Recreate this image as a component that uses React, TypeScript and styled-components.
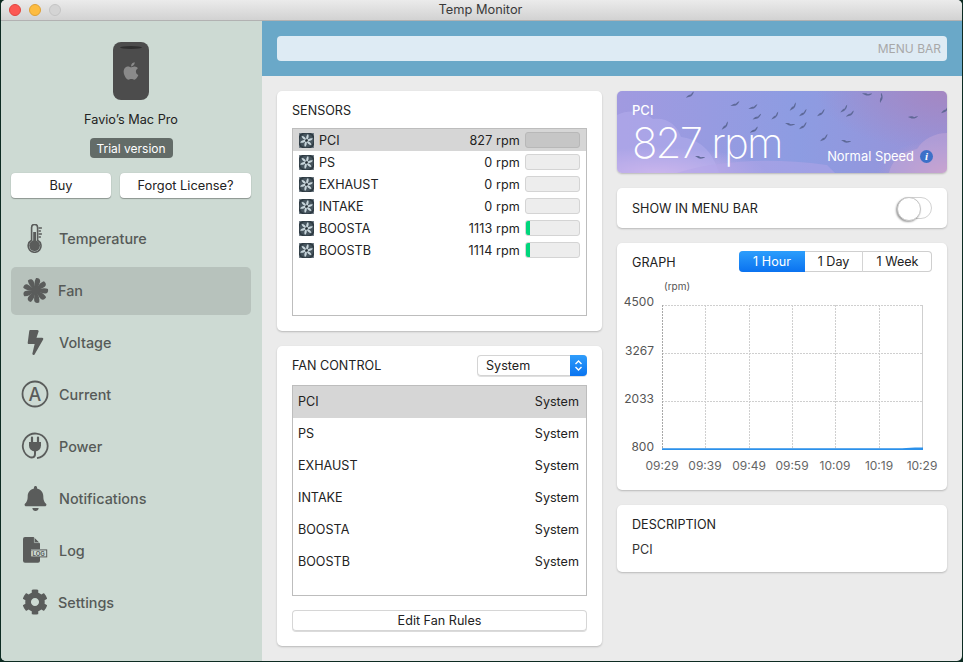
import React from "react";
import styled, { createGlobalStyle } from "styled-components";
import { FaApple, FaBell, FaBolt, FaCog } from "react-icons/fa";

const Global = createGlobalStyle`
  html, body { margin: 0; padding: 0; background: #0d2b22; }
  body { font-family: Inter, "Liberation Sans", sans-serif; font-size: 12.6px; color: #222; }
  * { box-sizing: border-box; }
`;

const Page = styled.div`
  width: 963px;
  height: 662px;
  padding: 0 1px 1px 1px;
  overflow: hidden;
`;
const Win = styled.div`
  height: 661px;
  border-radius: 5px;
  overflow: hidden;
  display: flex;
  flex-direction: column;
  background: #ebebeb;
`;
const TitleBar = styled.div`
  height: 21px;
  flex: none;
  position: relative;
  background: linear-gradient(#ebebeb, #d2d2d2);
  border-bottom: 1px solid #b2b2b2;
  display: flex;
  align-items: center;
  justify-content: center;
  font-size: 12.8px;
  color: #3a3a3a;
  padding: 0 2px 1px 0;
`;
const Lights = styled.div`
  position: absolute;
  left: 8px;
  top: 4px;
  display: flex;
  gap: 8px;
`;
const Light = styled.span<{ $c: string; $b: string }>`
  width: 12px;
  height: 12px;
  border-radius: 50%;
  background: ${p => p.$c};
  border: 1px solid ${p => p.$b};
`;
const Body = styled.div`
  flex: 1;
  display: flex;
  min-height: 0;
`;
const Side = styled.aside`
  width: 261px;
  flex: none;
  background: #cddad3;
  display: flex;
  flex-direction: column;
  align-items: center;
  padding: 21px 11px 0 10px;
`;
const MacBody = styled.div`
  width: 36px;
  height: 58px;
  border-radius: 8px;
  background: #4c4c4c;
  position: relative;
  display: flex;
  align-items: center;
  justify-content: center;
  color: #8a8a8a;
  font-size: 20px;
  &::before {
    content: "";
    position: absolute;
    top: 4px;
    left: 7px;
    right: 7px;
    height: 3px;
    border-radius: 50%;
    background: #2f2f2f;
  }
`;
const MacName = styled.div`
  margin-top: 12px;
  font-size: 12.7px;
  line-height: 16px;
  color: #222;
`;
const Badge = styled.div`
  margin-top: 10px;
  width: 83px;
  height: 20px;
  border-radius: 4px;
  background: #636c68;
  color: #fff;
  font-size: 12px;
  display: flex;
  align-items: center;
  justify-content: center;
`;
const BtnRow = styled.div`
  margin-top: 15px;
  width: 100%;
  display: flex;
  gap: 9px;
`;
const SideBtn = styled.div<{ $w: number }>`
  width: ${p => p.$w}px;
  height: 25px;
  background: #fff;
  border-radius: 4px;
  box-shadow: 0 1px 1px rgba(0, 0, 0, 0.3), 0 0 1px rgba(0, 0, 0, 0.2);
  font-size: 12.8px;
  color: #222;
  display: flex;
  align-items: center;
  justify-content: center;
`;
const Nav = styled.nav`
  margin-top: 17px;
  width: 100%;
  display: flex;
  flex-direction: column;
  gap: 4px;
`;
const NavItem = styled.div<{ $on?: boolean }>`
  height: 48px;
  border-radius: 5px;
  background: ${p => (p.$on ? "#b7c2bc" : "transparent")};
  display: flex;
  align-items: center;
  padding: 0 0 2px 10px;
  gap: 10px;
  color: #565a58;
  font-size: 14.4px;
  font-weight: 500;
`;
const NavIcon = styled.span<{ $tight?: boolean }>`
  width: 28px;
  height: 29px;
  flex: none;
  display: flex;
  align-items: center;
  justify-content: center;
  color: #5a5c5b;
  margin-right: ${p => (p.$tight ? "-1px" : "0")};
  svg { display: block; }
`;
const Main = styled.main`
  flex: 1;
  display: flex;
  flex-direction: column;
  min-width: 0;
`;
const Banner = styled.div`
  height: 55px;
  flex: none;
  background: #6aa8c8;
  padding: 15px;
`;
const MenuField = styled.div`
  height: 25px;
  border-radius: 4px;
  background: #deebf4;
  color: #a8a8a8;
  font-size: 12px;
  display: flex;
  align-items: center;
  justify-content: flex-end;
  padding-right: 6px;
`;
const Content = styled.div`
  flex: 1;
  display: flex;
  gap: 15px;
  padding: 15px;
`;
const Col = styled.div<{ $w: number }>`
  width: ${p => p.$w}px;
  display: flex;
  flex-direction: column;
  gap: 15px;
`;
const Card = styled.section<{ $h: number }>`
  height: ${p => p.$h}px;
  flex: none;
  background: #fff;
  border-radius: 5px;
  box-shadow: 0 1px 2px rgba(0, 0, 0, 0.22);
  padding: 0 15px;
  position: relative;
`;
const CardTitle = styled.div`
  font-size: 12.6px;
  line-height: 16px;
  color: #222;
`;
const LowTitle = styled(CardTitle)`
  padding-top: 2px;
`;
const SensorHead = styled(CardTitle)`
  padding-top: 12px;
  margin-bottom: 9px;
`;
const ListBox = styled.div<{ $h: number }>`
  height: ${p => p.$h}px;
  border: 1px solid #bdbdbd;
  background: #fff;
`;
const SensorRow = styled.div<{ $on?: boolean }>`
  height: 22px;
  display: flex;
  align-items: center;
  padding: 0 6px;
  background: ${p => (p.$on ? "#d6d6d6" : "transparent")};
`;
const SensorName = styled.span`
  margin-left: 5px;
  flex: 1;
`;
const SensorVal = styled.span`
  margin-right: 5px;
  letter-spacing: 0.1px;
`;
const Meter = styled.span<{ $on?: boolean }>`
  width: 55px;
  height: 16px;
  border-radius: 3px;
  border: 1px solid ${p => (p.$on ? "#b8b8b8" : "#d4d4d4")};
  background: ${p => (p.$on ? "#c6c6c6" : "#ededed")};
  display: block;
  overflow: hidden;
`;
const MeterFill = styled.span`
  display: block;
  height: 100%;
  background: #00d67c;
`;
const ControlHead = styled.div`
  height: 39px;
  display: flex;
  align-items: center;
  justify-content: space-between;
`;
const SelectBox = styled.div`
  width: 110px;
  height: 21px;
  border-radius: 4px;
  background: #fff;
  box-shadow: inset 0 0 0 1px #d4d4d4, 0 1px 0 rgba(0, 0, 0, 0.12);
  display: flex;
  align-items: center;
  justify-content: space-between;
  padding-left: 9px;
  overflow: hidden;
`;
const SelectArrows = styled.span`
  width: 17px;
  height: 21px;
  background: linear-gradient(#2f9dfb, #0a74f0);
  display: flex;
  align-items: center;
  justify-content: center;
`;
const ControlRow = styled.div<{ $on?: boolean }>`
  height: 32px;
  display: flex;
  align-items: center;
  justify-content: space-between;
  padding: 0 7px 2px 5px;
  background: ${p => (p.$on ? "#d6d6d6" : "transparent")};
`;
const EditBtn = styled.div`
  margin-top: 14px;
  height: 21px;
  border-radius: 4px;
  background: #fff;
  box-shadow: inset 0 0 0 1px #d6d6d6, 0 1px 0 rgba(0, 0, 0, 0.14);
  display: flex;
  align-items: center;
  justify-content: center;
`;
const Hero = styled.section`
  height: 82px;
  flex: none;
  border-radius: 5px;
  position: relative;
  overflow: hidden;
  box-shadow: 0 1px 2px rgba(0, 0, 0, 0.22);
  color: #fff;
  padding: 11px 15px 0;
  background:
    radial-gradient(ellipse 110px 26px at 12% 100%, #d8b8ea 0%, rgba(216, 184, 234, 0) 100%),
    radial-gradient(ellipse 70px 34px at 100% 100%, #cd9fc8 0%, rgba(205, 159, 200, 0) 100%),
    radial-gradient(ellipse 130px 60px at 100% 0%, #a487c2 0%, rgba(164, 135, 194, 0) 100%),
    linear-gradient(90deg, #a19ae0, #8d9ce2 55%, #9892d8);
`;
const Birds = styled.svg`
  position: absolute;
  inset: 0;
`;
const HeroName = styled.div`
  position: relative;
  font-size: 13px;
  line-height: 16px;
  font-weight: 500;
`;
const HeroValue = styled.div`
  position: relative;
  font-size: 42px;
  line-height: 40px;
  font-weight: 200;
  margin-top: 5px;
  letter-spacing: -1.8px;
`;
const HeroStatus = styled.div`
  position: absolute;
  right: 14px;
  bottom: 9px;
  display: flex;
  align-items: center;
  gap: 6px;
  font-size: 12.9px;
`;
const InfoDot = styled.span`
  width: 13px;
  height: 13px;
  border-radius: 50%;
  background: #3d70c8;
  color: #fff;
  font: italic 700 11px/13px "Liberation Serif", serif;
  text-align: center;
`;
const ToggleCard = styled(Card)`
  display: flex;
  align-items: center;
  justify-content: space-between;
`;
const Toggle = styled.span`
  width: 35px;
  height: 22px;
  border-radius: 11px;
  border: 1px solid #d2d2d2;
  position: relative;
  &::after {
    content: "";
    position: absolute;
    left: -1px;
    top: -1px;
    width: 22px;
    height: 22px;
    border-radius: 50%;
    background: #fff;
    border: 1px solid #c4c4c4;
    box-shadow: -1px 1px 2px rgba(0, 0, 0, 0.4);
  }
`;
const GraphHead = styled.div`
  display: flex;
  align-items: center;
  justify-content: space-between;
  padding-top: 8px;
`;
const Segments = styled.div`
  width: 193px;
  height: 21px;
  display: flex;
  border-radius: 4px;
  overflow: hidden;
  box-shadow: inset 0 0 0 1px #cfcfcf;
`;
const Segment = styled.div<{ $w: number; $on?: boolean; $div?: boolean }>`
  width: ${p => p.$w}px;
  display: flex;
  align-items: center;
  justify-content: center;
  color: ${p => (p.$on ? "#fff" : "#222")};
  background: ${p => (p.$on ? "linear-gradient(#2c9efc, #0a72f0)" : "transparent")};
  border-left: ${p => (p.$div ? "1px solid #d4d4d4" : "none")};
`;
const Chart = styled.svg`
  display: block;
  margin: 0 0 0 -15px;
`;
const DescText = styled.div`
  margin-top: 9px;
  line-height: 16px;
  color: #333;
`;
const DescHead = styled(CardTitle)`
  padding-top: 12px;
`;

const FanGlyph = () => (
  <svg width="15" height="15" viewBox="0 0 15 15">
    <rect width="15" height="15" rx="1" fill="#2f3b43" />
    <circle cx="7.5" cy="7.5" r="7" fill="#46545d" />
    {[0, 60, 120, 180, 240, 300].map(a => (
      <path key={a} d="M7.5 7.5 C6.8 4.8 7.2 2.2 9 1 C10.2 2.8 9.8 5.6 7.5 7.5Z" fill="#c9d6dc" transform={`rotate(${a} 7.5 7.5)`} />
    ))}
    <circle cx="7.5" cy="7.5" r="1.3" fill="#232c32" />
    <path d="M0.5 0.5h2M0.5 0.5v2M14.5 0.5h-2M14.5 0.5v2M0.5 14.5h2M0.5 14.5v-2M14.5 14.5h-2M14.5 14.5v-2" stroke="#8b99a1" strokeWidth="0.6" fill="none" />
  </svg>
);

const Thermo = () => (
  <svg width="22" height="29" viewBox="0 0 22 29" fill="none">
    <path d="M7.6 3.4a3 3 0 0 1 6 0v12.8a6.4 6.4 0 1 1-6 0Z" fill="#cddad3" stroke="#5a5c5b" strokeWidth="1.6" />
    <circle cx="10.6" cy="21.6" r="5.4" fill="#5a5c5b" />
    <rect x="9.2" y="8" width="2.8" height="12" fill="#5a5c5b" />
    <path d="M14.5 4h3.4M14.5 7h2.4M14.5 10h3.4M14.5 13h2.4" stroke="#5a5c5b" strokeWidth="1.3" />
  </svg>
);
const FanBig = () => (
  <svg width="27" height="27" viewBox="0 0 28 28">
    {[0, 40, 80, 120, 160, 200, 240, 280, 320].map(a => (
      <path key={a} d="M14 14 C12.4 9 12.6 4 14.6 1 C17.6 0.8 19.2 2.6 18.8 4.8 C18 8 16 11 14 14Z" fill="#5a5c5b" transform={`rotate(${a} 14 14)`} />
    ))}
    <circle cx="14" cy="14" r="4" fill="#5a5c5b" />
  </svg>
);
const Amp = () => (
  <svg width="28" height="28" viewBox="0 0 28 28">
    <circle cx="14" cy="14" r="12.5" fill="none" stroke="#5a5c5b" strokeWidth="1.8" />
    <text x="14" y="20.5" fontSize="18" fontFamily="Inter, sans-serif" textAnchor="middle" fill="#5a5c5b">A</text>
  </svg>
);
const Plug = () => (
  <svg width="28" height="28" viewBox="0 0 28 28" fill="none" stroke="#5a5c5b">
    <path d="M10 25.6A12.4 12.4 0 1 1 16 26.2" strokeWidth="1.8" />
    <path d="M11 5.5v5M17 5.5v5" strokeWidth="2.2" strokeLinecap="round" />
    <path d="M8 10h12v3.5a6 6 0 0 1-12 0Z" fill="#5a5c5b" stroke="none" />
    <path d="M14 18v4c0 2.5-1.5 3.6-4 3.6" strokeWidth="2" />
  </svg>
);
const LogIcon = () => (
  <svg width="26" height="26" viewBox="0 0 26 26">
    <path d="M1 2a2 2 0 0 1 2-2h8.6L18 6.4V12H9v8h9v3.8a2 2 0 0 1-2 2H3a2 2 0 0 1-2-2Z" fill="#5a5c5b" />
    <path d="M12.4 0.4 17.6 5.6H12.4Z" fill="#5a5c5b" stroke="#cddad3" strokeWidth="0.6" />
    <rect x="8.2" y="12.4" width="17" height="8" fill="#5a5c5b" />
    <rect x="9.2" y="13.4" width="15" height="6" fill="#cddad3" />
    <text x="16.7" y="18.9" fontSize="6" fontWeight="700" fontFamily="Inter, sans-serif" textAnchor="middle" fill="#5a5c5b">LOG</text>
  </svg>
);

const nav: [string, React.ReactNode, boolean?][] = [
  ["Temperature", <Thermo />],
  ["Fan", <FanBig />, true],
  ["Voltage", <FaBolt size={25} />],
  ["Current", <Amp />],
  ["Power", <Plug />],
  ["Notifications", <FaBell size={25} />],
  ["Log", <LogIcon />],
  ["Settings", <FaCog size={26} />],
];

const sensors: [string, string, number, boolean?][] = [
  ["PCI", "827 rpm", 0, true],
  ["PS", "0 rpm", 0],
  ["EXHAUST", "0 rpm", 0],
  ["INTAKE", "0 rpm", 0],
  ["BOOSTA", "1113 rpm", 8],
  ["BOOSTB", "1114 rpm", 8],
];
const controls = ["PCI", "PS", "EXHAUST", "INTAKE", "BOOSTA", "BOOSTB"];

const birds: [number, number, number][] = [
  [73, 4, -25], [118, 13, -15], [136, 16, -15], [176, 16, -40], [140, 26, -20], [158, 25, -35],
  [186, 22, -30], [204, 22, -30], [227, 18, -35], [233, 23, -25], [250, 3, 15], [264, 7, -70],
  [296, 26, 10], [328, 19, -30], [108, 35, -40], [137, 39, -25], [173, 33, 20], [186, 35, -30],
  [207, 47, -30], [229, 50, 20], [83, 66, 20],
];

const xs = [45, 88, 132, 175, 218, 262, 305];
const hLines = [33.5, 81.5, 129.5];
const times = ["09:29", "09:39", "09:49", "09:59", "10:09", "10:19", "10:29"];
const rpm: [string, number][] = [["4500", 34], ["3267", 83], ["2033", 131], ["800", 179]];
const labelFont = "Inter, 'Liberation Sans', sans-serif";

export default function App() {
  return (
    <Page>
      <Global />
      <Win>
        <TitleBar>
          <Lights>
            <Light $c="#fc5753" $b="#e0443e" />
            <Light $c="#fdbc40" $b="#dea034" />
            <Light $c="#d4d4d4" $b="#c4c4c4" />
          </Lights>
          Temp Monitor
        </TitleBar>
        <Body>
          <Side>
            <MacBody><FaApple /></MacBody>
            <MacName>Favio’s Mac Pro</MacName>
            <Badge>Trial version</Badge>
            <BtnRow>
              <SideBtn $w={100}>Buy</SideBtn>
              <SideBtn $w={131}>Forgot License?</SideBtn>
            </BtnRow>
            <Nav>
              {nav.map(([label, icon, on]) => (
                <NavItem key={label} $on={on}>
                  <NavIcon $tight={label === "Fan" || label === "Settings"}>{icon}</NavIcon>
                  {label}
                </NavItem>
              ))}
            </Nav>
          </Side>
          <Main>
            <Banner>
              <MenuField>MENU BAR</MenuField>
            </Banner>
            <Content>
              <Col $w={325}>
                <Card $h={240}>
                  <SensorHead>SENSORS</SensorHead>
                  <ListBox $h={188}>
                    {sensors.map(([name, val, pct, on]) => (
                      <SensorRow key={name} $on={on}>
                        <FanGlyph />
                        <SensorName>{name}</SensorName>
                        <SensorVal>{val}</SensorVal>
                        <Meter $on={on}>
                          {pct > 0 && <MeterFill style={{ width: `${pct}%` }} />}
                        </Meter>
                      </SensorRow>
                    ))}
                  </ListBox>
                </Card>
                <Card $h={300}>
                  <ControlHead>
                    <CardTitle>FAN CONTROL</CardTitle>
                    <SelectBox>
                      System
                      <SelectArrows>
                        <svg width="9" height="13" viewBox="0 0 9 13" fill="none" stroke="#fff" strokeWidth="1.4">
                          <path d="M1.5 5 4.5 2l3 3M1.5 8l3 3 3-3" />
                        </svg>
                      </SelectArrows>
                    </SelectBox>
                  </ControlHead>
                  <ListBox $h={211}>
                    {controls.map((c, i) => (
                      <ControlRow key={c} $on={i === 0}>
                        <span>{c}</span>
                        <span>System</span>
                      </ControlRow>
                    ))}
                  </ListBox>
                  <EditBtn>Edit Fan Rules</EditBtn>
                </Card>
              </Col>
              <Col $w={330}>
                <Hero>
                  <Birds width="330" height="82" viewBox="0 0 330 82">
                    <path d="M0 24c12-6 26-4 36 4 14-2 24 6 28 18 18 2 32 14 38 36H0Z" fill="#b9b2f0" opacity="0.45" />
                    <path d="M60 82c40-12 90-16 150-8l8 8Z" fill="#b3a6e8" opacity="0.5" />
                    <path d="M330 42c-12 0-24 6-30 16-12 2-24 8-28 24h58Z" fill="#c4a8d8" opacity="0.5" />
                    {birds.map(([x, y, r], i) => (
                      <path key={i} d="M-5 0.8 C-2 -0.8 0 -0.6 1 0 C2.5 -1 4 -1.8 5 -1.6 C3.4 0.6 1 1.8 -1 1.6Z" fill="#55608c" opacity="0.85" transform={`translate(${x} ${y}) rotate(${r})`} />
                    ))}
                  </Birds>
                  <HeroName>PCI</HeroName>
                  <HeroValue>827 rpm</HeroValue>
                  <HeroStatus>
                    Normal Speed
                    <InfoDot>i</InfoDot>
                  </HeroStatus>
                </Hero>
                <ToggleCard $h={40}>
                  <LowTitle>SHOW IN MENU BAR</LowTitle>
                  <Toggle />
                </ToggleCard>
                <Card $h={247}>
                  <GraphHead>
                    <LowTitle>GRAPH</LowTitle>
                    <Segments>
                      <Segment $w={66} $on>1 Hour</Segment>
                      <Segment $w={57}>1 Day</Segment>
                      <Segment $w={70} $div>1 Week</Segment>
                    </Segments>
                  </GraphHead>
                  <Chart width="330" height="204" viewBox="0 0 330 204" fontFamily={labelFont}>
                    <text x="47" y="18" fontSize="10" fill="#555">(rpm)</text>
                    {hLines.map(y => (
                      <line key={y} x1="45" x2="305" y1={y} y2={y} stroke="#cfcfcf" strokeDasharray="2 1" shapeRendering="crispEdges" />
                    ))}
                    {xs.map((x, i) => (
                      <line key={x} x1={x + 0.5} x2={x + 0.5} y1="33" y2="177" stroke={i === 0 ? "#a8a8a8" : "#cfcfcf"} strokeDasharray={i === 6 ? undefined : "2 1"} shapeRendering="crispEdges" />
                    ))}
                    <path d="M45 176.2H285L298 175.4H306V178H45Z" fill="#2b90ea" />
                    {rpm.map(([t, y]) => (
                      <text key={t} x="37" y={y} fontSize="12" fill="#555" textAnchor="end">{t}</text>
                    ))}
                    {times.map((t, i) => (
                      <text key={t} x={xs[i]} y="198" fontSize="12" fill="#666" textAnchor="middle">{t}</text>
                    ))}
                  </Chart>
                </Card>
                <Card $h={67}>
                  <DescHead>DESCRIPTION</DescHead>
                  <DescText>PCI</DescText>
                </Card>
              </Col>
            </Content>
          </Main>
        </Body>
      </Win>
    </Page>
  );
}
